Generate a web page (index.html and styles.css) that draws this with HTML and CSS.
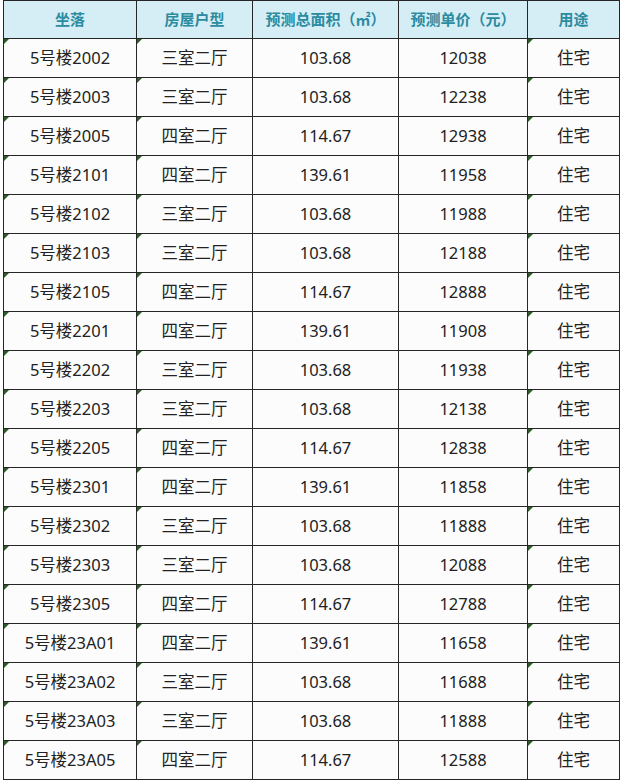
FILE: index.html
```html
<!DOCTYPE html>
<html lang="zh-CN">
<head>
<meta charset="utf-8">
<title>预测价格表</title>
<link rel="stylesheet" href="styles.css">
</head>
<body>
<div class="frame">
  <div class="sheet">
    <div class="cell head">坐落</div>
    <div class="cell head">房屋户型</div>
    <div class="cell head">预测总面积（㎡）</div>
    <div class="cell head">预测单价（元）</div>
    <div class="cell head">用途</div>

    <div class="cell txt">5号楼2002</div><div class="cell txt">三室二厅</div><div class="cell">103.68</div><div class="cell">12038</div><div class="cell txt">住宅</div>
    <div class="cell txt">5号楼2003</div><div class="cell txt">三室二厅</div><div class="cell">103.68</div><div class="cell">12238</div><div class="cell txt">住宅</div>
    <div class="cell txt">5号楼2005</div><div class="cell txt">四室二厅</div><div class="cell">114.67</div><div class="cell">12938</div><div class="cell txt">住宅</div>
    <div class="cell txt">5号楼2101</div><div class="cell txt">四室二厅</div><div class="cell">139.61</div><div class="cell">11958</div><div class="cell txt">住宅</div>
    <div class="cell txt">5号楼2102</div><div class="cell txt">三室二厅</div><div class="cell">103.68</div><div class="cell">11988</div><div class="cell txt">住宅</div>
    <div class="cell txt">5号楼2103</div><div class="cell txt">三室二厅</div><div class="cell">103.68</div><div class="cell">12188</div><div class="cell txt">住宅</div>
    <div class="cell txt">5号楼2105</div><div class="cell txt">四室二厅</div><div class="cell">114.67</div><div class="cell">12888</div><div class="cell txt">住宅</div>
    <div class="cell txt">5号楼2201</div><div class="cell txt">四室二厅</div><div class="cell">139.61</div><div class="cell">11908</div><div class="cell txt">住宅</div>
    <div class="cell txt">5号楼2202</div><div class="cell txt">三室二厅</div><div class="cell">103.68</div><div class="cell">11938</div><div class="cell txt">住宅</div>
    <div class="cell txt">5号楼2203</div><div class="cell txt">三室二厅</div><div class="cell">103.68</div><div class="cell">12138</div><div class="cell txt">住宅</div>
    <div class="cell txt">5号楼2205</div><div class="cell txt">四室二厅</div><div class="cell">114.67</div><div class="cell">12838</div><div class="cell txt">住宅</div>
    <div class="cell txt">5号楼2301</div><div class="cell txt">四室二厅</div><div class="cell">139.61</div><div class="cell">11858</div><div class="cell txt">住宅</div>
    <div class="cell txt">5号楼2302</div><div class="cell txt">三室二厅</div><div class="cell">103.68</div><div class="cell">11888</div><div class="cell txt">住宅</div>
    <div class="cell txt">5号楼2303</div><div class="cell txt">三室二厅</div><div class="cell">103.68</div><div class="cell">12088</div><div class="cell txt">住宅</div>
    <div class="cell txt">5号楼2305</div><div class="cell txt">四室二厅</div><div class="cell">114.67</div><div class="cell">12788</div><div class="cell txt">住宅</div>
    <div class="cell txt">5号楼23A01</div><div class="cell txt">四室二厅</div><div class="cell">139.61</div><div class="cell">11658</div><div class="cell txt">住宅</div>
    <div class="cell txt">5号楼23A02</div><div class="cell txt">三室二厅</div><div class="cell">103.68</div><div class="cell">11688</div><div class="cell txt">住宅</div>
    <div class="cell txt">5号楼23A03</div><div class="cell txt">三室二厅</div><div class="cell">103.68</div><div class="cell">11888</div><div class="cell txt">住宅</div>
    <div class="cell txt">5号楼23A05</div><div class="cell txt">四室二厅</div><div class="cell">114.67</div><div class="cell">12588</div><div class="cell txt">住宅</div>
  </div>
</div>
</body>
</html>
```
FILE: styles.css
```css
html, body {
  margin: 0;
  padding: 0;
  background: #ffffff;
}

body {
  font-family: "Noto Sans", "Noto Sans CJK SC", sans-serif;
  color: #222222;
}

.frame {
  display: flex;
  width: 622px;
  height: 783px;
  padding-left: 3px;
  border-right: 3px solid #2e2e2e;
  box-sizing: content-box;
  overflow: hidden;
}

.sheet {
  display: grid;
  grid-template-columns: 133px 116px 146px 129px 92px;
  grid-template-rows: 38px;
  grid-auto-rows: 39px;
  align-content: start;
  border-left: 1px solid #262626;
  border-top: 1px solid #262626;
  background: #fcfcfc;
  height: max-content;
}

.cell {
  position: relative;
  box-sizing: border-box;
  border-right: 1px solid #262626;
  border-bottom: 1px solid #262626;
  display: flex;
  align-items: center;
  justify-content: center;
  font-size: 16.5px;
  line-height: 1;
  padding-top: 1px;
  white-space: nowrap;
}

.head {
  background: #d5eef5;
  color: #2b8ba1;
  font-weight: 700;
  font-size: 15px;
  padding-top: 0;
}

.txt::before {
  content: "";
  position: absolute;
  left: 0;
  top: 0;
  width: 0;
  height: 0;
  border-top: 5px solid #2f5a2a;
  border-right: 5px solid transparent;
}
```
